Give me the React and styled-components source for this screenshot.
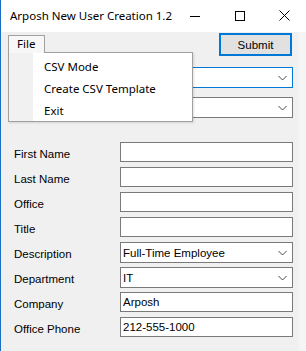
import React from "react";
import styled, { createGlobalStyle } from "styled-components";

const Global = createGlobalStyle`
  html, body { margin: 0; padding: 0; background: #f0f0f0; }
  body { width: 306px; height: 351px; overflow: hidden; }
  * { box-sizing: border-box; }
`;

const UI_FONT = `"Noto Sans", "Open Sans", sans-serif`;
const FORM_FONT = `"Liberation Sans", Arial, sans-serif`;

const Window = styled.div`
  width: 306px;
  height: 351px;
  display: flex;
  flex-direction: column;
  border-left: 1px solid #1a6fc4;
  background: #f0f0f0;
`;

const TitleBar = styled.div`
  height: 32px;
  background: #ffffff;
  display: flex;
  align-items: center;
  justify-content: space-between;
  padding-left: 9px;
`;

const Title = styled.div`
  font-family: ${UI_FONT};
  font-size: 11.5px;
  color: #000;
  padding-bottom: 1px;
  white-space: nowrap;
  flex-shrink: 0;
`;

const Controls = styled.div`
  display: flex;
  height: 100%;
  flex-shrink: 0;
`;

const CaptionButton = styled.div`
  width: 45px;
  height: 100%;
  display: flex;
  align-items: center;
  justify-content: center;
  padding-bottom: 1px;
`;

const Body = styled.div`
  flex: 1;
  display: flex;
`;

const Client = styled.div`
  width: 298px;
  display: flex;
  flex-direction: column;
  padding: 1px 6px 0 13px;
  position: relative;
`;

const Edge = styled.div`
  flex: 1;
  background: #f5f5f5;
`;

const TopRow = styled.div`
  display: flex;
  justify-content: space-between;
  align-items: flex-start;
  height: 23px;
  margin-left: -6px;
`;

const MenuRoot = styled.div`
  position: relative;
  margin-top: 2px;
`;

const MenuTab = styled.div`
  position: relative;
  z-index: 3;
  width: 37px;
  height: 18px;
  border: 1px solid #a0a0a0;
  border-bottom: none;
  background: #f7f7f7;
  font-family: ${UI_FONT};
  font-size: 11.5px;
  color: #000;
  padding-left: 8px;
  line-height: 16px;
`;

const Dropdown = styled.div`
  position: absolute;
  z-index: 2;
  top: 17px;
  left: 0;
  width: 185px;
  border: 1px solid #a0a0a0;
  background: linear-gradient(to right, #f1f1f1 0, #f1f1f1 24px, #ffffff 24px);
  padding: 2px 0 0 0;
  box-shadow: 1px 1px 2px rgba(0, 0, 0, 0.12);
`;

const MenuEntry = styled.div`
  height: 22px;
  display: flex;
  align-items: center;
  padding-left: 35px;
  font-family: ${UI_FONT};
  font-size: 11.5px;
  color: #000;
  white-space: nowrap;
`;

const SubmitButton = styled.div`
  width: 73px;
  height: 23px;
  margin-right: 1px;
  border: 2px solid #0078d7;
  background: #e1e1e1;
  display: flex;
  align-items: center;
  justify-content: center;
  font-family: ${FORM_FONT};
  font-size: 11.5px;
  color: #000;
`;

const Form = styled.div`
  display: flex;
  flex-direction: column;
`;

const Row = styled.div`
  display: grid;
  grid-template-columns: 106px 173px;
  align-items: start;
  height: ${(p) => p.$h}px;
  margin-top: ${(p) => p.$mt || 0}px;
`;

const Label = styled.div`
  font-family: ${FORM_FONT};
  font-size: 11.5px;
  color: #000;
  line-height: 20px;
  padding-top: 2px;
  white-space: nowrap;
`;

const TextBox = styled.div`
  height: ${(p) => (p.$combo ? 21 : 20)}px;
  border: 1px solid ${(p) => (p.$focus ? "#0078d7" : "#7a7a7a")};
  background: #ffffff;
  display: flex;
  align-items: center;
  justify-content: space-between;
  padding: 0 5px 0 2px;
  font-family: ${FORM_FONT};
  font-size: 11.5px;
  color: #000;
  white-space: nowrap;
`;

const Chevron = () => (
  <svg width="9" height="6" viewBox="0 0 9 6">
    <path d="M0.5 1 L4.5 5 L8.5 1" fill="none" stroke="#4a4a4a" strokeWidth="1" />
  </svg>
);

const Field = ({ combo, focus, value }) => (
  <TextBox $combo={combo} $focus={focus}>
    <span>{value}</span>
    {combo && <Chevron />}
  </TextBox>
);

const rows = [
  { label: "", combo: true, focus: true, h: 30, mt: 11 },
  { label: "", combo: true, h: 45 },
  { label: "First Name", h: 25 },
  { label: "Last Name", h: 25 },
  { label: "Office", h: 25 },
  { label: "Title", h: 25 },
  { label: "Description", combo: true, value: "Full-Time Employee", h: 25 },
  { label: "Department", combo: true, value: "IT", h: 25 },
  { label: "Company", value: "Arposh", h: 25 },
  { label: "Office Phone", value: "212-555-1000", h: 25 },
];

export default function App() {
  return (
    <>
      <Global />
      <Window>
        <TitleBar>
          <Title>Arposh New User Creation 1.2</Title>
          <Controls>
            <CaptionButton>
              <svg width="10" height="10" viewBox="0 0 10 10">
                <path d="M0 5.5 H10" stroke="#000" strokeWidth="1" />
              </svg>
            </CaptionButton>
            <CaptionButton>
              <svg width="10" height="10" viewBox="0 0 10 10">
                <rect x="0.5" y="0.5" width="9" height="9" fill="none" stroke="#000" strokeWidth="1" />
              </svg>
            </CaptionButton>
            <CaptionButton>
              <svg width="11" height="11" viewBox="0 0 11 11">
                <path d="M0.5 0.5 L10.5 10.5 M10.5 0.5 L0.5 10.5" stroke="#000" strokeWidth="1" />
              </svg>
            </CaptionButton>
          </Controls>
        </TitleBar>
        <Body>
          <Client>
            <TopRow>
              <MenuRoot>
                <MenuTab>File</MenuTab>
                <Dropdown>
                  <MenuEntry>CSV Mode</MenuEntry>
                  <MenuEntry>Create CSV Template</MenuEntry>
                  <MenuEntry>Exit</MenuEntry>
                </Dropdown>
              </MenuRoot>
              <SubmitButton>Submit</SubmitButton>
            </TopRow>
            <Form>
              {rows.map((r, i) => (
                <Row key={i} $h={r.h} $mt={r.mt}>
                  <Label>{r.label}</Label>
                  <Field combo={r.combo} focus={r.focus} value={r.value} />
                </Row>
              ))}
            </Form>
          </Client>
          <Edge />
        </Body>
      </Window>
    </>
  );
}
